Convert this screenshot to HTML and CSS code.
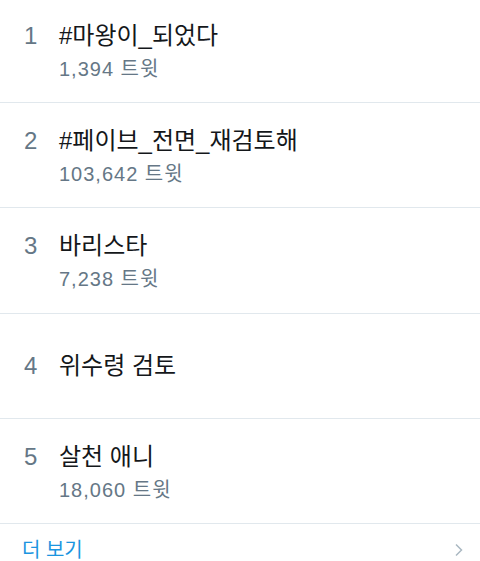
FILE: index.html
```html
<!DOCTYPE html>
<html lang="ko">
<head>
<meta charset="utf-8">
<link rel="stylesheet" href="styles.css">
</head>
<body>
<ul class="trends">
  <li class="trend">
    <div class="entry">
      <span class="rank">1</span>
      <div class="info">
        <div class="name">#마왕이_되었다</div>
        <div class="count">1,394 트윗</div>
      </div>
    </div>
  </li>
  <li class="trend">
    <div class="entry">
      <span class="rank">2</span>
      <div class="info">
        <div class="name">#페이브_전면_재검토해</div>
        <div class="count">103,642 트윗</div>
      </div>
    </div>
  </li>
  <li class="trend">
    <div class="entry">
      <span class="rank">3</span>
      <div class="info">
        <div class="name">바리스타</div>
        <div class="count">7,238 트윗</div>
      </div>
    </div>
  </li>
  <li class="trend">
    <div class="entry">
      <span class="rank">4</span>
      <div class="info">
        <div class="name single">위수령 검토</div>
      </div>
    </div>
  </li>
  <li class="trend">
    <div class="entry">
      <span class="rank">5</span>
      <div class="info">
        <div class="name">살천 애니</div>
        <div class="count">18,060 트윗</div>
      </div>
    </div>
  </li>
</ul>
<a class="more" href="#">
  <span class="more-label">더 보기</span>
  <svg class="chevron" width="10" height="14" viewBox="0 0 10 14"><path d="M2 1.5 L7.5 7 L2 12.5" fill="none" stroke="#aab8c2" stroke-width="1.5"/></svg>
</a>
</body>
</html>
```

FILE: styles.css
```css
html, body {
  margin: 0;
  padding: 0;
  background: #fff;
}
body {
  width: 480px;
  height: 561px;
  overflow: hidden;
  font-family: "Liberation Sans", "Noto Sans CJK KR", sans-serif;
}
.trends {
  list-style: none;
  margin: -2.25px 0 0 0;
  padding: 0;
}
.trend {
  height: 104.25px;
  border-bottom: 1px solid #e1e8ed;
  display: flex;
  align-items: center;
  padding-left: 24px;
}
.entry {
  display: flex;
  align-items: baseline;
}
.rank {
  width: 35px;
  font-size: 24px;
  line-height: 38px;
  color: #657786;
}
.info {
  display: flex;
  flex-direction: column;
}
.name {
  font-size: 24px;
  line-height: 38px;
  color: #14171a;
}
.name.single {
  line-height: 34px;
}
.count {
  font-size: 20px;
  letter-spacing: 1px;
  line-height: 28px;
  color: #657786;
}
.more {
  display: flex;
  align-items: center;
  justify-content: space-between;
  padding: 15px 16px 0 22px;
  text-decoration: none;
}
.more-label {
  font-size: 20px;
  color: #1b95e0;
  line-height: 22px;
}
.chevron {
  display: block;
}
```
